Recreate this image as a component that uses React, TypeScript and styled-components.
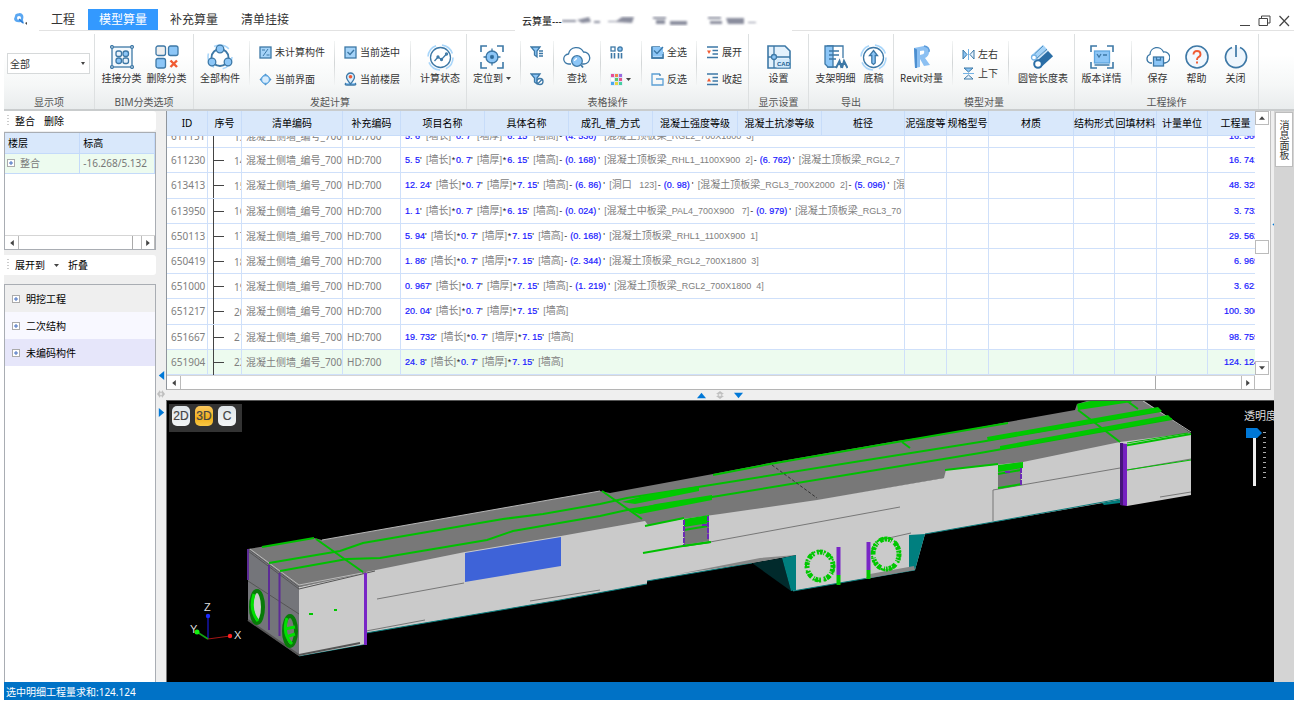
import React from 'react';
import styled, { createGlobalStyle } from 'styled-components';

const UI_FONT = `"Noto Sans", "Noto Sans CJK SC", sans-serif`;
const GRID_FONT = `"Liberation Sans", "Noto Sans CJK SC", sans-serif`;
const DARK = '#3d78a6';
const FILL = '#8cc6f7';

const GlobalStyle = createGlobalStyle`
  * { box-sizing: border-box; }
  body { margin: 0; background: #fff; font-family: ${UI_FONT}; font-size: 10px; line-height: 14px; color: #333; }
  button, select, input { font: inherit; color: inherit; margin: 0; }
  button { border: 0; padding: 0; background: none; white-space: nowrap; }
  svg { display: block; flex: none; }
`;

const Window = styled.div`
  display: flex;
  flex-direction: column;
  min-height: 100vh;
  padding: 0 5px 9px 4px;
`;

/* ---------- title bar ---------- */
const TitleBar = styled.header`
  display: flex;
  height: 31px;
`;
const Logo = styled.div`
  width: 35px;
  padding: 12px 0 0 9px;
`;
const Tabs = styled.nav`
  display: flex;
  align-items: flex-end;
  width: 476px;
  border-bottom: 1px solid #e2e2e2;
`;
const Tab = styled.a<{ $active?: boolean }>`
  height: 21px;
  padding: 0 11px;
  margin-right: 1px;
  font-size: 12px;
  line-height: 21px;
  text-decoration: none;
  color: ${(p) => (p.$active ? '#fff' : '#333')};
  background: ${(p) => (p.$active ? '#3399ff' : 'transparent')};
  &:first-child { padding: 0 12px; }
`;
const Title = styled.div`
  display: flex;
  width: 277px;
  padding: 14px 0 0 7px;
  color: #111;
`;
const WindowButtons = styled.div`
  display: flex;
  flex: 1;
  justify-content: flex-end;
  gap: 7px;
  padding: 11px 4px 0 0;
  border-bottom: 1px solid #e2e2e2;
`;

/* ---------- ribbon ---------- */
const Ribbon = styled.div`
  display: flex;
  height: 80px;
  padding-top: 3px;
  background: linear-gradient(#fff 30%, #f5f7f7 70%, #e9eced);
  border-bottom: 2px solid #c9cccd;
`;
const Group = styled.section`
  display: flex;
  flex-direction: column;
  padding: 0 6px;
  height: 75px;
  border-right: 1px solid #dde0e1;
`;
const GroupItems = styled.div<{ $gap?: number }>`
  display: flex;
  flex: 1;
  gap: ${(p) => p.$gap || 0}px;
`;
const GroupLabel = styled.div`
  height: 14px;
  text-align: center;
  color: #555;
  white-space: nowrap;
`;
const Divider = styled.span`
  width: 1px;
  height: 44px;
  margin: 7px 9px 0;
  background: linear-gradient(#f2f4f4, #d3d6d7, #f2f4f4);
`;
const BigButton = styled.button<{ $w: number }>`
  display: flex;
  flex-direction: column;
  align-items: center;
  justify-content: flex-start;
  width: ${(p) => p.$w}px;
  padding-top: 9px;
`;
const IconSlot = styled.span`
  display: flex;
  align-items: center;
  justify-content: center;
  height: 28px;
`;
const Caption = styled.span`
  display: flex;
  align-items: center;
  gap: 3px;
  height: 14px;
  line-height: 14px;
`;
const Stack = styled.div<{ $w: number; $tight?: boolean }>`
  display: flex;
  flex-direction: column;
  gap: ${(p) => (p.$tight ? 5 : 13)}px;
  width: ${(p) => p.$w}px;
  padding-top: ${(p) => (p.$tight ? 13 : 11)}px;
`;
const SmallButton = styled.button`
  display: flex;
  align-items: center;
  gap: 3px;
  height: 14px;
`;
const ScopeSelect = styled.select`
  appearance: none;
  width: 83px;
  height: 21px;
  margin: 19px -2px 0 -3px;
  padding: 0 2px;
  border: 1px solid #d6d9da;
  border-radius: 0;
  background: #fff url("data:image/svg+xml,%3Csvg xmlns='http://www.w3.org/2000/svg' width='4' height='3'%3E%3Cpath d='M0 0h4L2 3z' fill='%23444'/%3E%3C/svg%3E") no-repeat right 4px center;
`;

/* ---------- body ---------- */
const Body = styled.main`
  display: flex;
  flex: 1;
  background: #efefef;
`;
const Sidebar = styled.aside`
  display: flex;
  flex-direction: column;
  width: 152px;
`;
const SideTools = styled.div`
  display: flex;
  align-items: center;
  gap: 9px;
  height: 20px;
  margin-bottom: 1px;
  padding-left: 3px;
  border-radius: 0 3px 3px 0;
  background: #fff;
  color: #000;
`;
const Grip = styled.span`
  width: 2px;
  height: 12px;
  margin-right: -3px;
  background: repeating-linear-gradient(#ccc 0 1px, #fff 1px 3px);
`;
const FloorBox = styled.div`
  display: flex;
  flex-direction: column;
  height: 118px;
  margin-bottom: 5px;
  border: 1px solid #a9adb3;
  background: #fff;
`;
const FloorTable = styled.table`
  width: 100%;
  table-layout: fixed;
  border-collapse: collapse;
  th, td {
    height: 20px;
    padding: 0 3px;
    text-align: left;
    font-weight: 400;
    white-space: nowrap;
    border-right: 1px solid #c4dafa;
    border-bottom: 1px solid #c4dafa;
  }
  th { background: #d9e8fb; color: #000; }
  td { background: #edfbef; color: #777; padding-left: 0; }
  td + td { padding-left: 3px; }
`;
const FloorName = styled.span`
  display: flex;
  align-items: center;
  gap: 5px;
  padding-left: 2px;
`;
const HScroll = styled.div`
  display: flex;
  height: 14px;
  margin-top: auto;
  background: #fff;
  border-top: 1px solid #d5d5d5;
`;
const ScrollButton = styled.button<{ $side?: 'left' | 'right' }>`
  display: flex;
  align-items: center;
  justify-content: center;
  width: 14px;
  height: ${(p) => (p.$side ? 13 : 14)}px;
  border: 1px solid #bbb;
  border-width: ${(p) => (p.$side === 'left' ? '0 1px 0 0' : p.$side === 'right' ? '0 1px 0 1px' : '1px')};
  background: #fff;
`;
const HThumb = styled.div<{ $share: number }>`
  flex: ${(p) => p.$share};
  border-right: 1px solid #aaa;
`;
const HRest = styled.div<{ $share: number }>`
  flex: ${(p) => p.$share};
`;
const TreeBox = styled.ul`
  flex: 1;
  margin: 8px 0 0;
  padding: 0;
  list-style: none;
  border: 1px solid #a9adb3;
  border-bottom: 0;
  background: #fff;
`;
const TreeItem = styled.li<{ $bg: string }>`
  display: flex;
  align-items: center;
  gap: 6px;
  height: 27px;
  padding-left: 7px;
  color: #000;
  background: ${(p) => p.$bg};
`;
const VSplitter = styled.div`
  display: flex;
  flex-direction: column;
  align-items: center;
  gap: 10px;
  width: 10px;
  padding-top: 260px;
`;
const Center = styled.div`
  display: flex;
  flex: 1;
  min-width: 0;
  flex-direction: column;
`;
const GridArea = styled.div`
  display: grid;
  grid-template-columns: minmax(0, 1fr) 3px;
`;
const EdgeSplitter = styled.div`
  padding-top: 110px;
  overflow: hidden;
`;
const GridBox = styled.div`
  display: grid;
  grid-template-columns: minmax(0, 1fr) 15px;
  grid-template-rows: 264px 14px;
  border-left: 1px solid #8f959c;
  border-right: 1px solid #c2c2c2;
  border-bottom: 1px solid #b5b5b5;
  background: #fff;
`;
const GridClip = styled.div`
  overflow: hidden;
`;
const DataTable = styled.table`
  width: calc(100% + 8px);
  height: 264px;
  table-layout: fixed;
  border-collapse: separate;
  border-spacing: 0;
  th {
    height: 25px;
    padding: 0;
    overflow: hidden;
    font-weight: 400;
    color: #000;
    white-space: nowrap;
    background: #d9e8fb;
    border-right: 1px solid #c7dcf9;
    border-bottom: 1px solid #c7dcf9;
  }
  td {
    height: 25px;
    padding: 0;
    border-right: 1px solid #cfe0fa;
    border-bottom: 1px solid #cfe0fa;
  }
`;
const HeadText = styled.div`
  display: flex;
  justify-content: center;
`;
const Row = styled.tr<{ $selected?: boolean; $cut?: boolean }>`
  background: ${(p) => (p.$selected ? '#edfbef' : '#fff')};
  && td { height: ${(p) => (p.$cut ? 12 : 25)}px; }
`;
const Cell = styled.div<{ $cut?: boolean; $right?: boolean }>`
  display: flex;
  align-items: ${(p) => (p.$cut ? 'flex-end' : 'center')};
  justify-content: ${(p) => (p.$right ? 'flex-end' : 'flex-start')};
  height: ${(p) => (p.$cut ? '7px' : '20px')};
  margin-bottom: ${(p) => (p.$cut ? 4 : 0)}px;
  padding: 0 ${(p) => (p.$right ? 4 : 0)}px 0 4px;
  overflow: hidden;
  white-space: pre;
  color: #808080;
`;
const TreeCell = styled.div<{ $cut?: boolean }>`
  display: flex;
  align-items: ${(p) => (p.$cut ? 'flex-end' : 'center')};
  gap: 10px;
  height: ${(p) => (p.$cut ? '12px' : '25px')};
  margin: 0 0 -1px 5px;
  padding-bottom: ${(p) => (p.$cut ? 4 : 0)}px;
  border-left: 1px solid #444;
  overflow: hidden;
  color: #808080;
  &::before { content: ''; flex: none; width: 10px; border-top: 1px solid ${(p) => (p.$cut ? 'transparent' : '#444')}; }
`;
const Expr = styled.span`
  display: flex;
  align-items: center;
  font-family: ${GRID_FONT};
  font-size: 9px;
`;
const Num = styled.span`
  color: #1a1aff;
  -webkit-text-stroke: 0.2px #1a1aff;
  font-family: ${GRID_FONT};
  font-size: 9px;
`;
const HalfCell = styled.span<{ $align?: 'left' | 'center' | 'right'; $dark?: boolean }>`
  display: inline-block;
  width: 5px;
  text-align: ${(p) => p.$align || 'left'};
  color: ${(p) => (p.$dark ? '#222' : 'inherit')};
`;
const Note = styled.span`
  padding-left: 1px;
`;
const Han = styled.span`
  font-size: 10px;
`;
const VScroll = styled.div`
  display: flex;
  flex-direction: column;
  background: #fff;
`;
const VThumb = styled.div`
  width: 14px;
  height: 14px;
  border: 1px solid #bbb;
`;
const Spacer = styled.div<{ $share: number }>`
  flex: ${(p) => p.$share};
`;
const HSplitter = styled.div`
  display: flex;
  align-items: center;
  justify-content: center;
  gap: 10px;
  height: 10px;
`;

/* ---------- 3D view ---------- */
const Viewport = styled.section`
  position: relative;
  flex: 1;
  min-height: 282px;
  overflow: hidden;
  background: #000;
  border-top: 1px solid #555;
  border-left: 1px solid #777;
`;
const Scene = styled.svg`
  position: absolute;
  inset: 0;
  width: 100%;
  height: 100%;
`;
const ViewModes = styled.div`
  position: absolute;
  top: 3px;
  left: 2px;
  display: flex;
  gap: 5px;
  padding: 2px 6px 6px 3px;
  background: #333;
`;
const ModeButton = styled.button<{ $on?: boolean }>`
  width: 18px;
  height: 20px;
  border-radius: 5px;
  font: 12px/20px "Liberation Sans", sans-serif;
  text-align: center;
  color: #444;
  background: ${(p) => (p.$on ? 'linear-gradient(#fbc95f, #f2b01c 60%, #f9c846)' : 'linear-gradient(#dfe5e9, #f3f5f6)')};
  -webkit-text-stroke: 0.2px #444;
`;
const Opacity = styled.div`
  position: absolute;
  top: 8px;
  right: -2px;
  display: flex;
  flex-direction: column;
  align-items: flex-start;
  width: 32px;
  color: #ddd;
  white-space: nowrap;
`;
const OpacityLabel = styled.label`
  font-size: 11px;
  line-height: 14px;
`;
const SliderRow = styled.div`
  display: flex;
  gap: 1px;
  margin: 5px 0 0 2px;
`;
const Slider = styled.input`
  appearance: none;
  writing-mode: vertical-lr;
  width: 16px;
  height: 58px;
  background: linear-gradient(#eee, #eee) center / 3px 100% no-repeat;
  &::-webkit-slider-thumb {
    appearance: none;
    width: 16px;
    height: 10px;
    background: #0078d7;
    clip-path: polygon(0 0, 70% 0, 100% 50%, 70% 100%, 0 100%);
  }
`;
const Ticks = styled.span`
  width: 3px;
  height: 50px;
  margin-top: 4px;
  background: repeating-linear-gradient(#aaa 0 1px, transparent 1px 5px);
`;

const RightDock = styled.aside`
  width: 20px;
  padding: 1px 1px 0;
  background: #d4d4d4;
`;
const DockTab = styled.button`
  width: 18px;
  height: 55px;
  border: 1px solid #bdbdbd;
  background: #fff;
  font-size: 10px;
  line-height: 16px;
  writing-mode: vertical-rl;
  text-align: center;
`;
const StatusBar = styled.footer`
  height: 18px;
  padding-left: 2px;
  line-height: 20px;
  font-size: 10px;
  color: #fff;
  background: #0072c6;
`;

/* ---------- icons ---------- */
const Svg = ({ w, h = w, children }: { w: number; h?: number; children: React.ReactNode }) => (
  <svg width={w} height={h} viewBox={`0 0 ${w} ${h}`} fill="none" stroke={DARK} strokeWidth="1.3" aria-hidden>
    {children}
  </svg>
);

const Triangle = ({ dir, color = '#444', size = 5 }: { dir: 'up' | 'down' | 'left' | 'right'; color?: string; size?: number }) => {
  const d = { up: 'M0 8L5 2L10 8Z', down: 'M0 2H10L5 8Z', left: 'M8 0V10L2 5Z', right: 'M2 0V10L8 5Z' }[dir];
  return <svg width={size} height={size} viewBox="0 0 10 10" aria-hidden><path d={d} fill={color} /></svg>;
};
const Knob = ({ rotate = false }: { rotate?: boolean }) => (
  <svg width="8" height="8" viewBox="0 0 8 8" aria-hidden>
    <path d={rotate ? 'M3 0L0 4L3 8ZM5 0L8 4L5 8Z' : 'M0 3L4 0L8 3ZM0 5L4 8L8 5Z'} fill="#c0c0c0" />
    <circle cx="4" cy="4" r="2" fill="#e6e6e6" stroke="#bbb" />
  </svg>
);
const PlusBox = () => (
  <svg width="8" height="8" viewBox="0 0 8 8" aria-hidden>
    <rect x=".5" y=".5" width="7" height="7" fill="#fff" stroke="#aaa" />
    <path d="M2 4H6M4 2V6" stroke="#446ec0" />
  </svg>
);

const AttachIcon = () => (
  <Svg w={24}>
    <rect x="2" y="2" width="20" height="20" fill="#f4f9fd" />
    {[[2, 2], [22, 2], [2, 22], [22, 22]].map(([x, y]) => <circle key={`${x}-${y}`} cx={x} cy={y} r="1.4" fill="#fff" />)}
    <rect x="6" y="6" width="5.5" height="5.5" rx="2" fill="#e8f2fb" /><rect x="13" y="6" width="5.5" height="5.5" rx="2.5" fill={FILL} />
    <rect x="6" y="13" width="5.5" height="5.5" rx="2.5" fill={FILL} /><rect x="13" y="13" width="5.5" height="5.5" rx="2" fill="#e8f2fb" />
  </Svg>
);
const DeleteClassIcon = () => (
  <Svg w={24}>
    <rect x="1" y="1" width="9.5" height="9.5" rx="2" fill="#eee" /><rect x="13.5" y="1" width="9.5" height="9.5" rx="2" fill={FILL} />
    <rect x="1" y="13.5" width="9.5" height="9.5" rx="2" fill={FILL} />
    <path d="M15.5 15.5L22 22M22 15.5L15.5 22" stroke="#f05a32" strokeWidth="2.4" />
  </Svg>
);
const AllPartsIcon = () => (
  <Svg w={26}>
    <circle cx="13" cy="13" r="12" stroke="#a9d6fa" strokeWidth="1.6" strokeDasharray="16 9" />
    <circle cx="13" cy="13.5" r="8.5" strokeWidth="1.8" />
    <circle cx="13" cy="5" r="3.8" fill={FILL} /><circle cx="5" cy="18" r="3.8" fill={FILL} /><circle cx="21" cy="18" r="3.8" fill={FILL} />
  </Svg>
);
const PercentIcon = () => (
  <Svg w={13}><rect x="1" y="1" width="11" height="11" fill="#a5d3f8" /><path d="M4 10L9 3M3 4H6M7.5 9H10.5" strokeWidth="1" /></Svg>
);
const DiamondIcon = () => (
  <Svg w={13}><path d="M6.5 .5L12.5 6.5L6.5 12.5L.5 6.5Z" fill="#4c8fc7" stroke="none" /><circle cx="6.5" cy="6.5" r="4" fill="#d7ecfd" stroke="#5fa6df" /></Svg>
);
const CheckIcon = () => (
  <Svg w={13}><rect x="1" y="1" width="11" height="11" fill="#a5d3f8" /><path d="M3.5 6L6 8.5L10 4" strokeWidth="1.4" /></Svg>
);
const FloorPinIcon = () => (
  <Svg w={13} h={14}>
    <path d="M2 11Q0 13 3 13H10Q13 13 11 11" fill={FILL} />
    <path d="M6.5 12C4 9 2.5 7 2.5 5A4 4 0 0 1 10.500 5C10.500 7 9 9 6.500 12Z" fill="#d7ecfd" /><circle cx="6.5" cy="4.8" r="1.8" fill="#f05a32" stroke="none" />
  </Svg>
);
const StateIcon = () => (
  <Svg w={27}>
    <circle cx="13.500" cy="13.500" r="12.500" stroke="#a9d6fa" strokeWidth="1.6" strokeDasharray="14 6" />
    <circle cx="13.500" cy="13.500" r="10" fill="#fff" /><path d="M7.500 17L11 13L14.500 15.500L19.500 10" /><circle cx="11" cy="13" r="1" /><circle cx="14.500" cy="15.500" r="1" /><circle cx="19.500" cy="10" r="1" />
  </Svg>
);
const Corners = () => <path d="M1 7V1H7M17 1H23V7M23 17V23H17M7 23H1V17" strokeWidth="1.600" />;
const LocateIcon = () => (
  <Svg w={24}><Corners /><circle cx="12" cy="12" r="6" fill={FILL} /><circle cx="12" cy="12" r="1.5" fill="#1c5c91" /><path d="M12 3.500V7M12 17V20.500M3.500 12H7M17 12H20.500" /></Svg>
);
const FilterIcon = ({ clear = false }: { clear?: boolean }) => (
  <Svg w={14}>
    <path d="M1 2H10L7 6V12L4.500 10V6Z" fill={FILL} />
    {clear ? <><circle cx="10" cy="9.500" r="3" fill="#fff" /><path d="M8 11.500L12 7.500" /></> : <path d="M9 6H13M9 8.500H13M9 11H13" />}
  </Svg>
);
const CLOUD = 'M8 19H6A5 5 0 0 1 5.500 9A8 8 0 0 1 20.500 7A6 6 0 0 1 21 19H19';
const SearchCloudIcon = () => (
  <Svg w={28} h={24}><path d={CLOUD} fill="#fff" /><circle cx="14" cy="16" r="5.300" fill={FILL} /><path d="M11.500 16A3 3 0 0 1 14 13.500" stroke="#fff" /><path d="M18 20L20 22.500" strokeWidth="1.800" /></Svg>
);
const ColumnsIcon = () => (
  <Svg w={13}><rect x="1" y="1" width="4" height="4" /><circle cx="10" cy="3" r="2.200" fill={FILL} /><path d="M1.500 7V12.500M4.500 7V12.500M8.500 7V12.500M11.500 7V12.500" strokeWidth="1.600" /></Svg>
);
const PaletteIcon = () => (
  <Svg w={13}>
    <rect x=".5" y=".5" width="12" height="12" fill="#d8e4f4" stroke="none" />
    {['#e94d9a', '#f0874a', '#9b6ae0', '#fff', '#58c96a', '#e4578a', '#4aa8ef', '#e9d43f', '#45cfa0'].map((c, i) => (
      <rect key={c} x={1 + (i % 3) * 4} y={1 + Math.floor(i / 3) * 4} width="3" height="3" fill={c} stroke="none" />
    ))}
  </Svg>
);
const SelectAllIcon = () => <Svg w={13}><path d="M12 6V12H1V1H9" fill="#d7ecfd" /><rect x="1" y="1" width="11" height="9.500" fill={FILL} stroke="none" /><path d="M3 4.500L6 7.500L12 1M1 1V12H12V8" /></Svg>;
const InvertIcon = () => <Svg w={13}><path d="M9 1H1V12H12V6H5" stroke="#5b9fd4" /><path d="M9 1V3" /></Svg>;
const ExpandIcon = ({ up = false }: { up?: boolean }) => (
  <Svg w={13}><path d="M1 1H12M6.500 4.500H12M6.500 8H12M1 11.500H12" /><path d={up ? 'M1 8.500L3 5L5 8.500Z' : 'M1 4.500H5L3 8Z'} fill="#f05a32" stroke="none" /></Svg>
);
const CadIcon = () => (
  <Svg w={24}>
    <path d="M1 1H18L23 6V23H1Z" fill="#e3f1fc" strokeWidth="1.600" /><path d="M7 1V23M1 12H23" /><circle cx="7" cy="12" r="2.500" fill={FILL} />
    <rect x="9.500" y="14" width="13" height="8.500" fill="#d2e9fb" stroke="none" />
    <text x="10" y="20.500" fontSize="6" fontWeight="700" fontFamily="Liberation Sans, sans-serif" fill="#1c5c91" stroke="none">CAD</text>
  </Svg>
);
const BracketIcon = () => (
  <Svg w={24}><path d="M3 1H19V13M12 22H3Z" fill="#fff" /><path d="M1 1H9V22H4L1 19Z" fill={FILL} /><path d="M5 6H15M5 10H15M5 14H12" /><path d="M12 23L15.500 16L17.500 23M18 23L20 16L23.500 23M14 19H22" strokeWidth="2" /></Svg>
);
const DraftIcon = () => (
  <Svg w={27}><circle cx="13.500" cy="13.500" r="12.500" stroke="#a9d6fa" strokeWidth="1.600" strokeDasharray="14 6" /><circle cx="13.500" cy="13.500" r="10" fill="#fff" /><path d="M13.500 6.500L17.500 11.500H15.200V19L13.500 20.500L11.800 19V11.500H9.500Z" fill={FILL} /></Svg>
);
const RevitIcon = () => (
  <Svg w={20} h={24}>
    <path d="M2 3L12 1Q18 2 17 7Q17 11 13 13L18 20L12 21L8 14V22L3 23Z" fill="#8cc0f2" stroke="none" />
    <path d="M2 3L5 4.500V23L3 23Z" fill="#4d8fd0" stroke="none" /><path d="M8 6L11.500 5.500Q13 6.500 11.500 9L8 10Z" fill="#fff" stroke="none" /><path d="M12 1Q18 2 17 7" stroke="#5b9bda" />
  </Svg>
);
const MirrorIcon = ({ vertical = false }: { vertical?: boolean }) => (
  <Svg w={13}><g transform={vertical ? 'rotate(90 6.500 6.500)' : undefined}><path d="M1 2V11L5 6.500Z" fill={FILL} strokeWidth="1" /><path d="M12 2V11L8 6.500Z" fill="#e8f3fd" strokeWidth="1" /><path d="M6.500 1V12" strokeWidth="1" stroke="#73b2e5" /></g></Svg>
);
const PipeIcon = () => (
  <Svg w={26}>
    <path d="M4 13L15 3" strokeWidth="6" stroke="#a5d3f8" /><path d="M4.500 10L13 2M7 14L17 5" strokeWidth="1" stroke="#4d8fc0" />
    <path d="M8 20L20 9" strokeWidth="9" stroke="#2b6ea6" /><path d="M7 16L18 6" stroke="#d7ecfd" strokeWidth="1.500" />
    <circle cx="8" cy="20" r="3.800" fill="#fff" strokeWidth="2" stroke="#2b6ea6" /><circle cx="4" cy="13.500" r="2.500" fill="#fff" stroke="#73b2e5" />
  </Svg>
);
const VersionIcon = () => <Svg w={24}><Corners /><rect x="4.500" y="6" width="15" height="12" fill={FILL} stroke="#5fa6df" /><path d="M7 9L9 12L11 9M13 10H17M4.500 20H19.500" /></Svg>;
const SaveCloudIcon = () => (
  <Svg w={25} h={24}><path d="M7 18H5A4.500 4.500 0 0 1 5 9.500A7 7 0 0 1 18.500 7A5.500 5.500 0 0 1 20 18H19" fill="#fff" /><rect x="8.500" y="12" width="10" height="9" fill={FILL} /><path d="M11.500 12V15H15.500V12" /></Svg>
);
const HelpIcon = () => (
  <Svg w={24}><circle cx="12" cy="12" r="11" fill="#f2f8fe" strokeWidth="1.600" /><path d="M8.500 9.500Q8.500 6 12 6T15.500 9.300Q15.500 11.500 13 12.500Q12 13 12 15M12 16.500V18.500" stroke="#f05a32" strokeWidth="1.900" /></Svg>
);
const PowerIcon = () => <Svg w={24}><circle cx="12" cy="12.500" r="10.500" fill="#eef6fd" stroke="none" /><path d="M8 2.500A10.500 10.500 0 1 0 16 2.500M12 0V12" strokeWidth="1.700" /></Svg>;

/* Masked project name that follows the product title. */
const MaskedName = () => (
  <svg width="210" height="16" viewBox="0 0 210 16" aria-hidden>
    <defs><filter id="soft"><feGaussianBlur stdDeviation="1.200" /></filter></defs>
    <g filter="url(#soft)" fill="#8b8e9e">
      <path d="M0 6H14V8H0ZM15 6L27 3L29 8L20 9ZM32 7H38V9H32ZM46 7H58V8H46ZM53 8L60 3H72L70 9Z" />
      <path d="M91 3H104V5H91ZM94 6H103V10H94ZM108 7H125V11H108ZM146 3H159V5H146ZM148 7H160V10H148ZM164 4H182V10H166ZM186 8H194V9H186Z" />
    </g>
  </svg>
);

/* ---------- data ---------- */
const columns: [string, number][] = [
  ['ID', 41], ['序号', 34], ['清单编码', 101], ['补充编码', 58], ['项目名称', 84], ['具体名称', 84], ['成孔_槽_方式', 84],
  ['混凝土强度等级', 85], ['混凝土抗渗等级', 84], ['桩径', 83], ['泥强度等', 42], ['规格型号', 42], ['材质', 85],
  ['结构形式', 41], ['回填材料', 42], ['计量单位', 51], ['工程量', 56],
];
const rows: [string, string, string, string][] = [
  ['611151', '13', "5.6'[墙长]*0.7'[墙厚]*6.15'[墙高]-(4.536)'[混凝土顶板梁_RGL2_700X1800  3]", '16.566'],
  ['611230', '14', "5.5'[墙长]*0.7'[墙厚]*6.15'[墙高]-(0.168)'[混凝土顶板梁_RHL1_1100X900  2]-(6.762)'[混凝土顶板梁_RGL2_7", '16.741'],
  ['613413', '15', "12.24'[墙长]*0.7'[墙厚]*7.15'[墙高]-(6.86)'[洞口   123]-(0.98)'[混凝土顶板梁_RGL3_700X2000  2]-(5.096)'[混", '48.325'],
  ['613950', '16', "1.1'[墙长]*0.7'[墙厚]*6.15'[墙高]-(0.024)'[混凝土中板梁_PAL4_700X900   7]-(0.979)'[混凝土顶板梁_RGL3_70", '3.732'],
  ['650113', '17', "5.94'[墙长]*0.7'[墙厚]*7.15'[墙高]-(0.168)'[混凝土顶板梁_RHL1_1100X900  1]", '29.562'],
  ['650419', '18', "1.86'[墙长]*0.7'[墙厚]*7.15'[墙高]-(2.344)'[混凝土顶板梁_RGL2_700X1800  3]", '6.969'],
  ['651000', '19', "0.967'[墙长]*0.7'[墙厚]*7.15'[墙高]-(1.219)'[混凝土顶板梁_RGL2_700X1800  4]", '3.621'],
  ['651217', '20', "20.04'[墙长]*0.7'[墙厚]*7.15'[墙高]", '100.300'],
  ['651667', '21', "19.732'[墙长]*0.7'[墙厚]*7.15'[墙高]", '98.759'],
  ['651904', '22', "24.8'[墙长]*0.7'[墙厚]*7.15'[墙高]", '124.124'],
];

const NumberText = ({ value }: { value: string }) => (
  <Num>
    {value.split(/([.()])/).map((s, i) => (/^[.()]$/.test(s) ? <HalfCell key={i} $align={s === '(' ? 'right' : 'left'}>{s}</HalfCell> : s))}
  </Num>
);
const Expression = ({ value }: { value: string }) => (
  <Expr>
    {value.match(/\[[^\]]*\]?|['*-]|[\d.()]+/g)!.map((t, i) => {
      if (t[0] === '[') return <Note key={i}>{t.split(/([\u4e00-\u9fff]+)/).map((s, j) => (j % 2 ? <Han key={j}>{s}</Han> : s))}</Note>;
      if (/^['*-]$/.test(t)) return <HalfCell key={i} $dark $align={t === "'" ? 'left' : 'center'}>{t}</HalfCell>;
      return <NumberText key={i} value={t} />;
    })}
  </Expr>
);

const Big = ({ icon, label, w = 41, menu }: { icon: React.ReactNode; label: string; w?: number; menu?: boolean }) => (
  <BigButton $w={w}><IconSlot>{icon}</IconSlot><Caption>{label}{menu && <Triangle dir="down" />}</Caption></BigButton>
);
const Small = ({ icon, label }: { icon: React.ReactNode; label: string }) => <SmallButton>{icon}{label}</SmallButton>;

const Model = () => (
  <Scene viewBox="167 401 1107 281" preserveAspectRatio="xMidYMid slice" aria-hidden>
    {/* roof */}
    <path d="M248 549L314 538L322 540L560 498L600 491L610 493L713 474L770 463L897 441L940 435L1008 422L1075 410L1077 404L1090 400H1143L1191 433L1127 446L945 478L710 520L366 574L299 587Z" fill="#787878" />
    <path d="M322 540L560 498L600 491M1143 401L1191 432" stroke="#b5b5b5" fill="none" />
    {/* side wall */}
    <path d="M366 572L465 552L561 536L645 521L648 525L683 519L720 514L817 500L944 478L946 470L1023 462L1120 442L1191 433V495L1127 506L1120 500L925 534L915 570L793 591L796 555L752 563L647 581V584L560 600L366 633Z" fill="#cacaca" />
    <path d="M752 563L782 558L791 591Z" fill="#012a2c" />
    <path d="M782 558L796 555V590L791 591Z M909 535L925 534L915 570L909 571Z" fill="#007f7f" />
    <path d="M366 633L560 600L647 584M647 581L752 563M925 534L993 522L1120 499M793 591L915 570M299 656L366 644" fill="none" stroke="#087b7b" />
    <path d="M678 574L760 558L796 555L752 563Z M870 574L914 566L915 570L865 579Z" fill="#888" />
    <path d="M465 553L561 537V566L465 582Z" fill="#3e63d8" />
    <path d="M377 599L464 583M710 542L900 507M993 490L1120 468M993 490V521M366 631L425 620M530 601L600 590M880 540L911 533M1160 497L1191 492M1127 470L1191 459" fill="none" stroke="#777" />
    {/* left end block */}
    <path d="M248 549L299 587V656L248 620Z" fill="#74757a" />
    <path d="M299 587L366 573V644L299 656Z" fill="#cacaca" />
    <path d="M248 551L299 589L375 571M248 581L299 614" fill="none" stroke="#555" />
    <path d="M248 620L299 655L360 643" fill="none" stroke="#555" strokeWidth="2" />
    <path d="M250 549L299 585L362 573" fill="none" stroke="#bbb" />
    <path d="M248 549V580M269 565V630M279.500 573V636" fill="none" stroke="#5c2b96" strokeWidth="2" />
    <path d="M365.500 573V645" stroke="#7926c6" strokeWidth="3" />
    <ellipse cx="257" cy="607" rx="6" ry="16" fill="#ccc" stroke="#087b08" strokeWidth="4" /><path d="M254 594Q249 610 258 621" fill="none" stroke="#00e000" strokeWidth="3" />
    <ellipse cx="290" cy="631" rx="6" ry="15" fill="#777" stroke="#087b08" strokeWidth="4" /><path d="M287 618Q282 634 292 644M285 629L295 627M286 637L295 634" fill="none" stroke="#00e000" strokeWidth="3" />
    <path d="M309 614H313M334 610H337" stroke="#00c800" strokeWidth="2" />
    {/* green beams */}
    <g fill="none" stroke="#00c000" strokeWidth="2">
      <path d="M269 563L340 551L363 543L503 519L543 514L600 504L627 498L698 487L980 442L1161 411" />
      <path d="M280 571L347 559L380 558L487 540L513 531L600 516L627 510L712 497L980 453L1172 419" />
      <path d="M316 539L363 572M602 491L642 519M645 526L684 518M643 553L683 546L711 542M713 475L770 464L897 442L1008 423M902 442L910 448M945 470L998 464M1123 446L1191 434M1078 410L1120 442M1127 401L1138 409M262 547L314 538" />
      <path d="M1127 443L1188 433M1127 470L1191 460" strokeWidth="1" />
    </g>
    <g fill="#00c800">
      <path d="M622 502L647 495L699 486V491L635 504Z M629 511L656 504L712 495V500L640 514Z M987 437L1158 407L1162 411L988 441Z M1000 446L1168 415L1172 419L1000 450Z M1077 404L1095 400H1130L1132 402L1078 410Z" />
    </g>
    {/* openings */}
    <path d="M684 520L709 516V541L684 545Z M998 466L1021 462V485L998 489Z" fill="#777" />
    <path d="M684 519L709 515V523L684 527Z M998 465L1023 462V468L998 472Z" fill="#00c800" />
    <path d="M684 530L708 526M683 546L710 542M998 474L1021 470M998 488L1022 484" stroke="#00c000" strokeWidth="2" />
    <path d="M684 520V545M708 516V540M1021 468V485M702 525H708M1005 472H1011" stroke="#6c2ab5" strokeWidth="2" strokeDasharray="5 1" />
    <path d="M772 465L817 498" stroke="#333" strokeDasharray="3 2" />
    <path d="M1120 443L1127 444V506L1120 505Z" fill="#7520c0" /><path d="M1120 443H1123V505H1120Z" fill="#46147a" />
    <path d="M1102 503L1120 500V503L1104 505Z" fill="#007f7f" />
    {/* shaft rings */}
    <g fill="none" stroke="#00c800">
      <ellipse cx="820" cy="566" rx="13" ry="14" strokeWidth="5" strokeDasharray="2 1 3 1 1 2 4 1 2 3" />
      <ellipse cx="820" cy="566" rx="14" ry="15" strokeWidth="2" strokeDasharray="4 2 2 3" />
      <ellipse cx="886" cy="554" rx="13" ry="15" strokeWidth="5" strokeDasharray="3 1 2 1 1 3 4 1" />
      <ellipse cx="886" cy="554" rx="14" ry="16" strokeWidth="2" strokeDasharray="5 2 2 3" />
      <path d="M838.500 575V585M868.500 570V579" strokeWidth="4" />
    </g>
    <path d="M838.500 547V575M868.500 542V570" stroke="#7926c6" strokeWidth="4" />
    {/* axis gizmo */}
    <path d="M208 616V639" stroke="#1515a8" strokeWidth="1.500" /><path d="M208 639L230 636" stroke="#a31515" /><path d="M208 639L197 632" stroke="#13a313" strokeWidth="1.500" />
    <circle cx="208" cy="616" r="2.200" fill="#1b2bff" /><circle cx="230" cy="636" r="2.200" fill="#ff1f1f" /><circle cx="197" cy="632" r="2.500" fill="#12f012" />
    <g fill="#ddd" fontFamily="Liberation Sans, sans-serif" fontSize="11"><text x="204" y="611">Z</text><text x="234" y="639">X</text><text x="190" y="633">Y</text></g>
  </Scene>
);

export default function App() {
  return (
    <Window>
      <GlobalStyle />
      <TitleBar>
        <Logo>
          <svg width="16" height="15" viewBox="0 0 16 15" aria-hidden>
            <path d="M2 4Q2 1 5 1.500Q8 0 10 3Q11 5 10 8L11 12L8 10Q2 11 1 7Z" fill="#5aa7f2" /><circle cx="6" cy="6" r="2" fill="#fff" /><path d="M6 7L10 11" stroke="#2a78d0" strokeWidth="1.500" /><path d="M12 11L14 13V10Z" fill="#444" />
          </svg>
        </Logo>
        <Tabs>
          <Tab href="#project">工程</Tab>
          <Tab href="#model" $active>模型算量</Tab>
          <Tab href="#extra">补充算量</Tab>
          <Tab href="#list">清单挂接</Tab>
        </Tabs>
        <Title>云算量---<MaskedName /></Title>
        <WindowButtons>
          <button aria-label="最小化"><svg width="12" height="14" viewBox="0 0 12 14"><path d="M1 11.500H11" stroke="#444" /></svg></button>
          <button aria-label="还原"><svg width="13" height="14" viewBox="0 0 13 14" fill="none" stroke="#444"><path d="M1 4.500H9.500V11.500H1ZM3.500 4V2H12V9H10" /></svg></button>
          <button aria-label="关闭窗口"><svg width="12" height="14" viewBox="0 0 12 14"><path d="M1.500 2L11 12M11 2L1.500 12" stroke="#444" strokeWidth="1.200" /></svg></button>
        </WindowButtons>
      </TitleBar>

      <Ribbon>
        <Group>
          <GroupItems><ScopeSelect aria-label="显示项"><option>全部</option></ScopeSelect></GroupItems>
          <GroupLabel>显示项</GroupLabel>
        </Group>
        <Group>
          <GroupItems $gap={4}><Big icon={<AttachIcon />} label="挂接分类" /><Big icon={<DeleteClassIcon />} label="删除分类" /></GroupItems>
          <GroupLabel>BIM分类选项</GroupLabel>
        </Group>
        <Group>
          <GroupItems>
            <Big icon={<AllPartsIcon />} label="全部构件" w={40} />
            <Divider />
            <Stack $w={66}><Small icon={<PercentIcon />} label="未计算构件" /><Small icon={<DiamondIcon />} label="当前界面" /></Stack>
            <Divider />
            <Stack $w={57}><Small icon={<CheckIcon />} label="当前选中" /><Small icon={<FloorPinIcon />} label="当前楼层" /></Stack>
            <Divider />
            <Big icon={<StateIcon />} label="计算状态" w={40} />
          </GroupItems>
          <GroupLabel>发起计算</GroupLabel>
        </Group>
        <Group>
          <GroupItems>
            <Big icon={<LocateIcon />} label="定位到" w={38} menu />
            <Divider />
            <Stack $w={14}><SmallButton aria-label="筛选"><FilterIcon /></SmallButton><SmallButton aria-label="清除筛选"><FilterIcon clear /></SmallButton></Stack>
            <Divider />
            <Big icon={<SearchCloudIcon />} label="查找" w={28} />
            <Divider />
            <Stack $w={22}><SmallButton aria-label="列设置"><ColumnsIcon /></SmallButton><SmallButton aria-label="颜色"><PaletteIcon /><Triangle dir="down" /></SmallButton></Stack>
            <Divider />
            <Stack $w={36}><Small icon={<SelectAllIcon />} label="全选" /><Small icon={<InvertIcon />} label="反选" /></Stack>
            <Divider />
            <Stack $w={36}><Small icon={<ExpandIcon />} label="展开" /><Small icon={<ExpandIcon up />} label="收起" /></Stack>
          </GroupItems>
          <GroupLabel>表格操作</GroupLabel>
        </Group>
        <Group>
          <GroupItems><Big icon={<CadIcon />} label="设置" w={47} /></GroupItems>
          <GroupLabel>显示设置</GroupLabel>
        </Group>
        <Group>
          <GroupItems $gap={4}><Big icon={<BracketIcon />} label="支架明细" /><Big icon={<DraftIcon />} label="底稿" w={27} /></GroupItems>
          <GroupLabel>导出</GroupLabel>
        </Group>
        <Group>
          <GroupItems>
            <Big icon={<RevitIcon />} label="Revit对量" w={43} />
            <Divider />
            <Stack $w={37} $tight><Small icon={<MirrorIcon />} label="左右" /><Small icon={<MirrorIcon vertical />} label="上下" /></Stack>
            <Divider />
            <Big icon={<PipeIcon />} label="圆管长度表" w={50} />
          </GroupItems>
          <GroupLabel>模型对量</GroupLabel>
        </Group>
        <Group>
          <GroupItems>
            <Big icon={<VersionIcon />} label="版本详情" />
            <Divider />
            <GroupItems $gap={6}>
              <Big icon={<SaveCloudIcon />} label="保存" w={33} /><Big icon={<HelpIcon />} label="帮助" w={33} /><Big icon={<PowerIcon />} label="关闭" w={33} />
            </GroupItems>
          </GroupItems>
          <GroupLabel>工程操作</GroupLabel>
        </Group>
      </Ribbon>

      <Body>
        <Sidebar>
          <SideTools><Grip /><button>整合</button><button>删除</button></SideTools>
          <FloorBox>
            <FloorTable>
              <thead><tr><th>楼层</th><th>标高</th></tr></thead>
              <tbody><tr><td><FloorName><PlusBox />整合</FloorName></td><td>-16.268/5.132</td></tr></tbody>
            </FloorTable>
            <HScroll>
              <ScrollButton $side="left" aria-label="向左"><Triangle dir="left" size={6} /></ScrollButton>
              <HThumb $share={114} /><HRest $share={8} />
              <ScrollButton $side="right" aria-label="向右"><Triangle dir="right" size={6} /></ScrollButton>
            </HScroll>
          </FloorBox>
          <SideTools><Grip /><button>展开到</button><Triangle dir="down" /><button>折叠</button></SideTools>
          <TreeBox>
            <TreeItem $bg="#efefef"><PlusBox />明挖工程</TreeItem>
            <TreeItem $bg="#f8f8ff"><PlusBox />二次结构</TreeItem>
            <TreeItem $bg="#e6e6fa"><PlusBox />未编码构件</TreeItem>
          </TreeBox>
        </Sidebar>

        <VSplitter><Triangle dir="left" color="#0078d7" size={9} /><Knob rotate /><Triangle dir="right" color="#0078d7" size={9} /></VSplitter>

        <Center>
          <GridArea>
            <GridBox>
              <GridClip>
                <DataTable>
                  <colgroup>{columns.map(([name, w]) => <col key={name} width={w} />)}</colgroup>
                  <thead><tr>{columns.map(([name]) => <th key={name}><HeadText>{name}</HeadText></th>)}</tr></thead>
                  <tbody>
                    {rows.map(([id, no, expr, qty], i) => (
                      <Row key={id} $cut={i === 0} $selected={id === '651904'}>
                        <td><Cell $cut={i === 0}>{id}</Cell></td>
                        <td><TreeCell $cut={i === 0}>{no}</TreeCell></td>
                        <td><Cell $cut={i === 0}>混凝土侧墙_编号_700</Cell></td>
                        <td><Cell $cut={i === 0}>HD:700</Cell></td>
                        <td colSpan={6}><Cell $cut={i === 0}><Expression value={expr} /></Cell></td>
                        <td /><td /><td /><td /><td /><td />
                        <td><Cell $cut={i === 0} $right><NumberText value={qty} /></Cell></td>
                      </Row>
                    ))}
                  </tbody>
                </DataTable>
              </GridClip>
              <VScroll>
                <ScrollButton aria-label="向上"><Triangle dir="up" size={6} /></ScrollButton>
                <Spacer $share={115} /><VThumb /><Spacer $share={107} />
                <ScrollButton aria-label="向下"><Triangle dir="down" size={6} /></ScrollButton>
              </VScroll>
              <HScroll>
                <ScrollButton $side="left" aria-label="表格向左"><Triangle dir="left" size={6} /></ScrollButton>
                <HThumb $share={976} /><HRest $share={85} />
                <ScrollButton $side="right" aria-label="表格向右"><Triangle dir="right" size={6} /></ScrollButton>
              </HScroll>
            </GridBox>
            <EdgeSplitter><Triangle dir="left" color="#0078d7" size={7} /></EdgeSplitter>
          </GridArea>
          <HSplitter><Triangle dir="up" color="#0078d7" size={9} /><Knob /><Triangle dir="down" color="#0078d7" size={9} /></HSplitter>
          <Viewport>
            <Model />
            <ViewModes><ModeButton>2D</ModeButton><ModeButton $on>3D</ModeButton><ModeButton>C</ModeButton></ViewModes>
            <Opacity>
              <OpacityLabel htmlFor="opacity">透明度</OpacityLabel>
              <SliderRow><Slider id="opacity" type="range" min="0" max="10" defaultValue="0" /><Ticks /></SliderRow>
            </Opacity>
          </Viewport>
        </Center>

        <RightDock><DockTab>消息面板</DockTab></RightDock>
      </Body>
      <StatusBar>选中明细工程量求和:124.124</StatusBar>
    </Window>
  );
}
